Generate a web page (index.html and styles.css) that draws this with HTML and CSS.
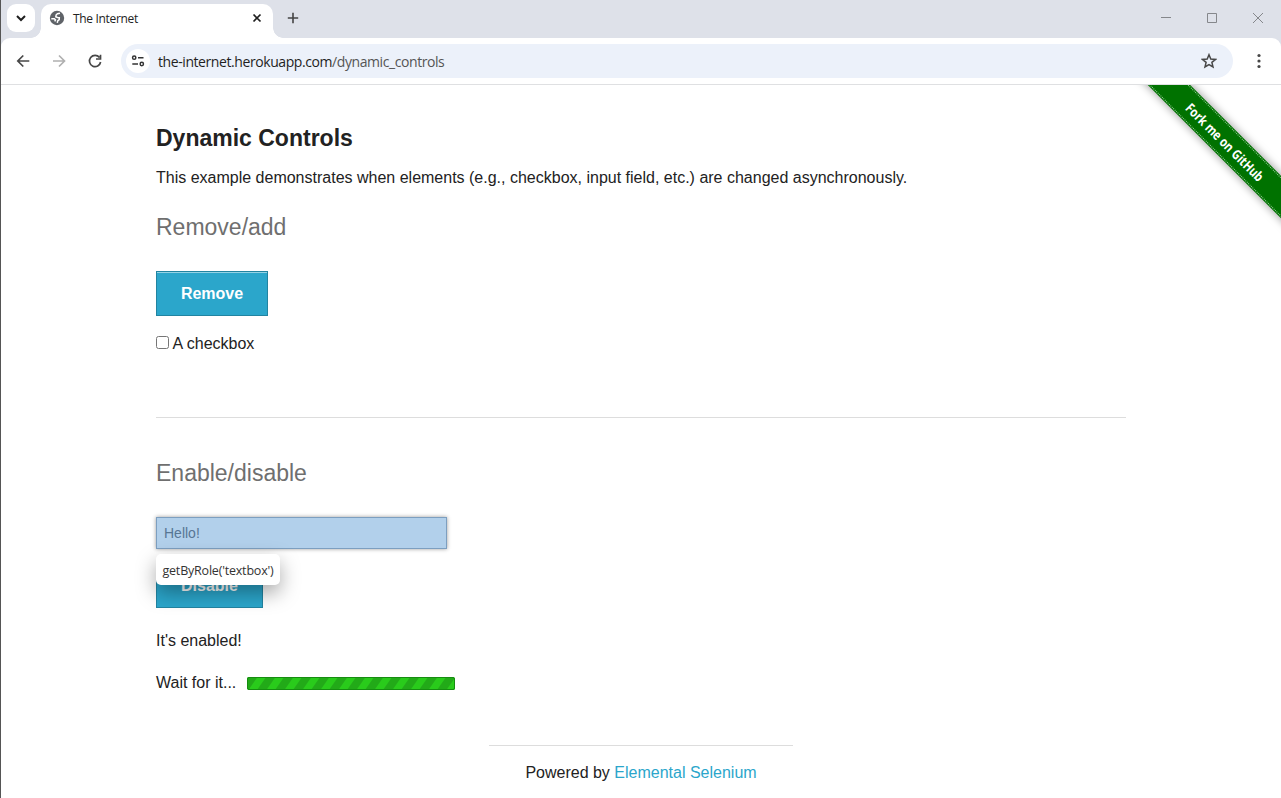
FILE: index.html
```html
<!DOCTYPE html>
<html lang="en">
<head>
<meta charset="utf-8">
<title>The Internet</title>
<link rel="stylesheet" href="styles.css">
</head>
<body>
<div class="window">
  <header class="tabstrip">
    <div class="tabsearch"><svg width="28" height="28" viewBox="0 0 28 28"><path d="M10 12l4 4 4-4" fill="none" stroke="#1f1f1f" stroke-width="2"/></svg></div>
    <div class="tab">
      <svg class="favicon" width="16" height="16" viewBox="0 0 16 16"><circle cx="8" cy="8" r="7.200" fill="#5f6368"/><path d="M11 3.200L8.500 3.700 7.200 4.800 6.800 6.700 8.500 7.500 10.300 7.700 10.200 9.600 8.700 10.800 8.300 12.800M2.300 8.700h3l1.200 1.200-.8 1.500" fill="none" stroke="#fff" stroke-width="1.500"/></svg>
      <span class="tab-title">The Internet</span>
      <svg class="tab-close" width="10" height="10" viewBox="0 0 10 10"><path d="M1.500 1.500l7 7m0-7l-7 7" stroke="#1f1f1f" stroke-width="1.7"/></svg>
    </div>
    <svg class="newtab" width="12" height="12" viewBox="0 0 12 12"><path d="M6 .8v10.400M.8 6h10.400" stroke="#444" stroke-width="1.6"/></svg>
    <svg class="winbtns" width="104" height="12" viewBox="0 0 104 12" fill="none" stroke="#85878b"><path d="M0 5.500h10M46.500 1.500h9v9h-9zM92 1l10 10m0-10L92 11"/></svg>
  </header>
  <nav class="toolbar">
    <svg class="nav-icons" width="90" height="16" viewBox="0 0 90 16" fill="none" stroke="#474747" stroke-width="1.7"><path d="M14.300 8H3M8.300 2.500L2.800 8l5.500 5.500"/><path d="M38 8h11M44 2.500L49.500 8 44 13.500" stroke="#b0b0b0"/><path d="M84.500 4.600A5.600 5.600 0 1 0 85.600 9M85.500 1.800V6H81"/></svg>
    <div class="omnibox">
      <div class="siteinfo"><svg width="14" height="12" viewBox="0 0 14 12" fill="none" stroke="#333" stroke-width="1.5"><circle cx="3.200" cy="2.700" r="1.650"/><path d="M7 2.700h5.500M1.300 9H7"/><circle cx="10.800" cy="9" r="1.650"/></svg></div>
      <span class="url">the-internet.herokuapp.com<span class="path">/dynamic_controls</span></span>
      <svg class="star" width="16" height="16" viewBox="0 0 16 16"><path d="M8 1.700l1.800 4.300 4.700.4-3.600 3 1.100 4.600L8 11.600 4 14l1.100-4.600-3.600-3 4.700-.4z" fill="none" stroke="#474747" stroke-width="1.500"/></svg>
    </div>
    <svg class="dots" width="4" height="16" viewBox="0 0 4 16" fill="#474747"><circle cx="2" cy="2.500" r="1.600"/><circle cx="2" cy="8" r="1.600"/><circle cx="2" cy="13.500" r="1.600"/></svg>
  </nav>
  <main class="page">
    <div class="ribbon"><span class="ribbon-text">Fork me on GitHub</span></div>
    <div class="content">
      <h1 class="title">Dynamic Controls</h1>
      <p class="intro">This example demonstrates when elements (e.g., checkbox, input field, etc.) are changed asynchronously.</p>
      <h2 class="section">Remove/add</h2>
      <button class="button remove">Remove</button>
      <label class="check"><input class="box" type="checkbox">A checkbox</label>
      <hr class="divider">
      <h2 class="section">Enable/disable</h2>
      <div class="field-wrap"><div class="field">Hello!</div><div class="tooltip">getByRole('textbox')</div></div>
      <button class="button disable">Disable</button>
      <p class="message">It's enabled!</p>
      <div class="loading">Wait for it... <svg class="bar" width="208" height="13" viewBox="0 0 208 13"><defs><pattern id="stripe" width="18" height="13" patternUnits="userSpaceOnUse" patternTransform="translate(1 0)"><path d="M9.500 0h8.500L9 13H.5z" fill="#29cb1b"/></pattern></defs><rect width="208" height="13" rx="2" fill="#22aa18"/><rect width="208" height="13" rx="2" fill="url(#stripe)"/><rect x=".5" y=".5" width="207" height="12" rx="1.500" fill="none" stroke="#168d10"/></svg></div>
      <footer class="footer">Powered by <a class="link">Elemental Selenium</a></footer>
    </div>
  </main>
</div>
</body>
</html>
```
FILE: styles.css
```css
* { box-sizing: border-box; }
body { margin: 0; background: #fff; color: #222; font: 16px/24px "Liberation Sans", Arial, sans-serif; }
h1, h2, p, hr { margin: 0; }
.window { width: 1281px; height: 798px; overflow: hidden; border-left: 1px solid #555; display: flex; flex-direction: column; background: #dee1e9; }
.tabstrip { flex: 0 0 38px; display: flex; align-items: flex-start; background: #dee1e9; }
.tabsearch { width: 28px; height: 28px; margin: 4px 0 0 6px; border-radius: 9px; background: #fff; }
.tabsearch svg { display: block; }
.tab { position: relative; width: 232px; height: 34px; margin: 4px 0 0 6px; padding: 0 11px 6px 8px; border-radius: 10px 10px 0 0; background: #fff; display: flex; align-items: center; }
.tab::before, .tab::after { content: ""; position: absolute; bottom: 0; width: 10px; height: 10px; }
.tab::before { left: -10px; background: radial-gradient(circle at 0 0, transparent 9.5px, #fff 10px); }
.tab::after { right: -10px; background: radial-gradient(circle at 100% 0, transparent 9.5px, #fff 10px); }
.tab-title { margin-left: 8px; padding-top: 2px; font: 12px/16px "Open Sans", "Noto Sans", sans-serif; letter-spacing: -0.33px; }
.tab-close { margin-left: auto; }
.newtab { margin: 12px 0 0 14px; }
.winbtns { margin: 12px 16px 0 auto; }
.toolbar { flex: 0 0 47px; display: flex; align-items: center; background: #fff; border-bottom: 1px solid #dfe0e2; border-radius: 9px 9px 0 0; }
.nav-icons { margin-left: 14px; }
.omnibox { width: 1112px; height: 34px; margin-left: 16px; padding: 0 16px 0 5px; border-radius: 17px; background: #ecf1fa; display: flex; align-items: center; }
.siteinfo { width: 24px; height: 24px; border-radius: 50%; background: #fff; display: grid; place-items: center; }
.url { margin-left: 8px; padding-top: 1px; font: 14px/20px "Open Sans", "Noto Sans", sans-serif; letter-spacing: -0.42px; color: #1f1f1f; }
.path { color: #555; }
.star { margin-left: auto; }
.dots { margin-left: 24px; }
.page { position: relative; flex: 1; overflow: hidden; background: #fff; }
.ribbon { position: absolute; left: 1075px; top: 42px; width: 300px; height: 30px; background: #007200; box-shadow: 0 0 8px 1px rgba(0,0,0,.35); transform: rotate(45deg); display: flex; justify-content: center; align-items: center; }
.ribbon::before { content: ""; position: absolute; inset: 1px 0; border-top: 1px dotted #9acd9a; border-bottom: 1px dotted #9acd9a; }
.ribbon-text { color: #fff; font: bold 13.5px/20px "Open Sans", "Noto Sans", sans-serif; transform: translate(-1px, 1px) scaleX(.82); white-space: nowrap; }
.content { width: 970px; margin-left: 155px; padding-top: 37px; display: flex; flex-direction: column; align-items: flex-start; }
.title { font-size: 23px; line-height: 32px; }
.intro { margin-top: 12px; }
.section { margin-top: 21px; font-size: 23px; font-weight: 400; line-height: 32px; color: #6f6f6f; }
.button { border: 1px solid #2284a1; background: #2ba6cb; box-shadow: inset 0 1px 0 rgba(255,255,255,.5); color: #fff; font: bold 16px/16px "Liberation Sans", Arial, sans-serif; padding: 0; height: 45px; }
.remove { width: 112px; margin-top: 28px; }
.disable { width: 107px; margin-top: 14px; }
.check { display: flex; align-items: center; margin-top: 16px; }
.box { width: 13px; height: 13px; margin: 0 3.500px 3px 0; }
.divider { width: 970px; height: 1px; border: 0; background: #ddd; margin: 61px 0 18px; }
.field-wrap { position: relative; z-index: 1; margin-top: 28px; }
.field { width: 291px; height: 32px; padding: 0 7px; border: 1px solid #7d9fc0; background: #b2d0eb; box-shadow: 0 0 4px rgba(0,0,0,.4); color: #577694; font-size: 14px; line-height: 31px; }
.tooltip { position: absolute; left: 0; top: 37px; width: 124px; height: 31px; border-radius: 5px; background: #fff; box-shadow: 0 8px 20px rgba(0,0,0,.35); color: #333; font: 12.5px/34px "Open Sans", "Noto Sans", sans-serif; letter-spacing: -0.2px; text-align: center; white-space: nowrap; }
.message { margin-top: 21px; }
.loading { margin-top: 18px; display: flex; align-items: center; }
.bar { margin: 1px 0 0 11px; }
.footer { width: 304px; margin: 50px 0 0 333px; padding-top: 15px; border-top: 1px solid #ddd; text-align: center; }
.link { color: #2ba6cb; }
```
